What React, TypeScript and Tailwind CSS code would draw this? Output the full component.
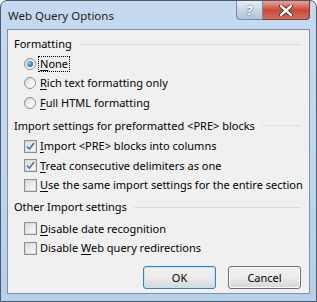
import React from 'react';

const font = {fontFamily: '"Noto Sans", "Open Sans", sans-serif'};

function U({children}: {children: React.ReactNode}) {
  return <span className="underline underline-offset-2">{children}</span>;
}

function Radio({checked}: {checked?: boolean}) {
  return (
    <span className="flex h-[12px] w-[12px] items-center justify-center rounded-full border border-[#8e8f8f] bg-gradient-to-br from-[#d0d0d0] via-[#f2f2f2] to-[#ffffff]">
      {checked && (
        <span className="h-[6px] w-[6px] rounded-full bg-[radial-gradient(circle_at_35%_35%,#8ad1ff,#1b6bbd_70%,#0e3f8a)]" />
      )}
    </span>
  );
}

function Check({checked}: {checked?: boolean}) {
  return (
    <span className="flex h-[13px] w-[13px] items-center justify-center border border-[#8e8f8f] bg-white">
      <span className="flex h-[11px] w-[11px] items-center justify-center border border-[#dadada] bg-gradient-to-br from-[#dcdcdc] to-[#fbfbfb]">
        {checked && (
          <svg width="9" height="9" viewBox="0 0 9 9">
            <path d="M1 4.5 L3.5 7 L8 1" fill="none" stroke="#4a6fb0" strokeWidth="1.6" />
          </svg>
        )}
      </span>
    </span>
  );
}

function GroupHeader({label}: {label: string}) {
  return (
    <div className="flex h-[16px] items-center gap-[7px] pl-[6px] pr-[8px]">
      <span className="whitespace-nowrap">{label}</span>
      <span className="h-px flex-1 bg-[#d5dfe5]" />
    </div>
  );
}

function Row({control, focus, children}: {control: React.ReactNode; focus?: boolean; children: React.ReactNode}) {
  return (
    <div className="flex h-[19.5px] items-center pl-[16px]">
      <span className="w-[14px]">{control}</span>
      <span
        className={
          'whitespace-nowrap border px-[1px] leading-[14px] ' +
          (focus ? 'border-dotted border-black' : 'border-transparent')
        }
      >
        {children}
      </span>
    </div>
  );
}

export default function App() {
  return (
    <div className="h-[302px] w-[317px] text-[11px] leading-[16px] text-black" style={font}>
      <div className="flex h-full w-full flex-col rounded-t-[7px] border border-[#4d5a6b] bg-gradient-to-b from-[#c5daf0] via-[#bfd6ee] to-[#b7d0ea] px-[6px] pb-[7px]">
        <div className="flex h-[28px] items-start justify-between">
          <div className="pl-[1px] pt-[7px] text-[11.5px] text-[#1e1e1e]">Web Query Options</div>
          <div className="flex">
            <div className="flex h-[19px] w-[27px] items-center justify-center rounded-bl-[4px] border border-t-0 border-[#7889a3] bg-gradient-to-b from-[#e6eef7] via-[#c7d6e6] to-[#b0c4d8] text-[13px] font-bold text-white [text-shadow:0_0_2px_#33475f]">
              ?
            </div>
            <div className="flex h-[19px] w-[47px] items-center justify-center rounded-br-[4px] border border-l-0 border-t-0 border-[#7a3b36] bg-gradient-to-b from-[#e8a397] via-[#c9493a] to-[#d56b5b]">
              <svg width="14" height="11" viewBox="0 0 14 11">
                <path d="M2 1 L12 10 M12 1 L2 10" stroke="#3b1f1d" strokeWidth="4" strokeLinecap="round" />
                <path d="M2 1 L12 10 M12 1 L2 10" stroke="#ffffff" strokeWidth="2.4" strokeLinecap="round" />
              </svg>
            </div>
          </div>
        </div>
        <div className="flex flex-1 flex-col border border-[#8190a3] bg-[#f0f0f0] pt-[6px]">
          <GroupHeader label="Formatting" />
          <div className="pt-[2px]">
            <Row control={<Radio checked />} focus>
              <U>N</U>one
            </Row>
            <Row control={<Radio />}>
              <U>R</U>ich text formatting only
            </Row>
            <Row control={<Radio />}>
              <U>F</U>ull HTML formatting
            </Row>
          </div>
          <div className="pt-[5px]">
            <GroupHeader label="Import settings for preformatted <PRE> blocks" />
          </div>
          <div className="pt-[3px]">
            <Row control={<Check checked />}>
              <U>I</U>mport &lt;PRE&gt; blocks into columns
            </Row>
            <Row control={<Check checked />}>
              <U>T</U>reat consecutive delimiters as one
            </Row>
            <Row control={<Check />}>
              <U>U</U>se the same import settings for the entire section
            </Row>
          </div>
          <div className="pt-[4px]">
            <GroupHeader label="Other Import settings" />
          </div>
          <div className="pt-[4px]">
            <Row control={<Check />}>
              <U>D</U>isable date recognition
            </Row>
            <Row control={<Check />}>
              Disable <U>W</U>eb query redirections
            </Row>
          </div>
          <div className="flex flex-1 items-start justify-end gap-[12px] pr-[8px] pt-[8px]">
            <button className="h-[23px] w-[73px] rounded-[3px] border border-[#3c7fb1] bg-gradient-to-b from-[#f2f2f2] via-[#ebebeb] to-[#d6d6d6] text-[11px] shadow-[inset_0_0_0_1px_#bde6fd]">
              OK
            </button>
            <button className="h-[23px] w-[73px] rounded-[3px] border border-[#707070] bg-gradient-to-b from-[#f2f2f2] via-[#ebebeb] to-[#d6d6d6] text-[11px] shadow-[inset_0_0_0_1px_#fcfcfc]">
              Cancel
            </button>
          </div>
        </div>
      </div>
    </div>
  );
}
